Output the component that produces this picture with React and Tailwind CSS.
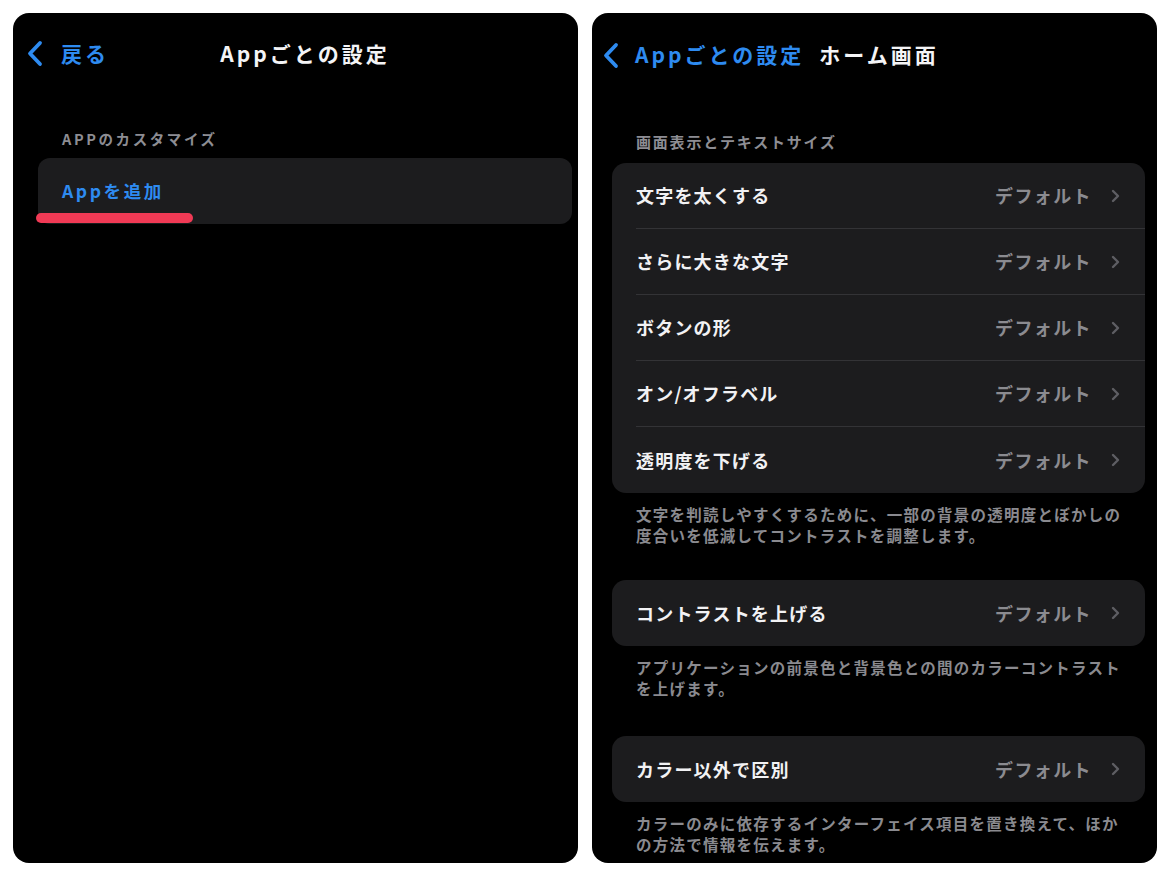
import React from "react";

const FONT = { fontFamily: '"Noto Sans CJK JP", "Noto Sans", sans-serif' };

function BackChevron() {
  return (
    <svg width="18" height="27" viewBox="0 0 18 27" fill="none">
      <path d="M14 3 L4 13.5 L14 24" stroke="#2e8bf0" strokeWidth="3.8" strokeLinecap="round" strokeLinejoin="round" />
    </svg>
  );
}

function RowChevron() {
  return (
    <svg width="9" height="14" viewBox="0 0 9 14" fill="none">
      <path d="M2 2 L7 7 L2 12" stroke="#5e5e63" strokeWidth="2.4" strokeLinecap="round" strokeLinejoin="round" />
    </svg>
  );
}

function Row({ label, last }) {
  return (
    <div className="flex h-[66px] items-stretch pl-[24px]">
      <div className={`flex flex-1 items-center justify-between pr-[25px] ${last ? "" : "border-b border-[#333336]"}`}>
        <span className="text-[18px] font-bold tracking-[1.2px] text-[#f2f2f4]">{label}</span>
        <span className="flex items-center gap-[19px]">
          <span className="text-[18px] font-bold tracking-[1.4px] text-[#8b8b90]">デフォルト</span>
          <RowChevron />
        </span>
      </div>
    </div>
  );
}

function Footer({ children }) {
  return (
    <p className="pl-[24px] pr-[18px] pt-[11px] text-[15.5px] font-bold leading-[21px] tracking-[1.25px] text-[#8a8a8f]">
      {children}
    </p>
  );
}

export default function App() {
  return (
    <div className="flex h-[878px] w-[1170px] gap-[14px] bg-white pl-[13px] pt-[13px]" style={FONT}>
      {/* Left panel */}
      <div className="relative flex h-[850px] w-[565px] flex-col rounded-[16px] bg-black">
        <div className="mt-[25px] grid h-[28px] grid-cols-[1fr_auto_1fr] items-center pl-[13px]">
          <div className="flex items-center gap-[17px]">
            <BackChevron />
            <span className="text-[21px] font-bold tracking-[3px] text-[#2e8bf0]">戻る</span>
          </div>
          <span className="pl-[6px] text-[21px] font-bold tracking-[3px] text-[#f4f4f6]">Appごとの設定</span>
          <div />
        </div>
        <div className="mt-[63px] h-[20px] pl-[49px] text-[14.5px] font-bold leading-[20px] tracking-[2.6px] text-[#8d8d93]">
          APPのカスタマイズ
        </div>
        <div className="ml-[25px] mr-[6px] mt-[9px] flex h-[66px] items-center rounded-[12px] bg-[#1c1c1e] pl-[24px]">
          <span className="text-[17.5px] font-bold tracking-[2.6px] text-[#2e8bf0]">Appを追加</span>
        </div>
        <div className="absolute left-[23px] top-[200px] h-[10px] w-[157px] rounded-full bg-[#f03a55]" />
      </div>

      {/* Right panel */}
      <div className="flex h-[850px] w-[565px] flex-col overflow-hidden rounded-[16px] bg-black">
        <div className="mt-[28px] flex h-[28px] items-center pl-[10px]">
          <BackChevron />
          <span className="ml-[15px] text-[21px] font-bold tracking-[3px] text-[#2e8bf0]">Appごとの設定</span>
          <span className="ml-[15px] text-[21px] font-bold tracking-[3px] text-[#f4f4f6]">ホーム画面</span>
        </div>
        <div className="mt-[63px] h-[20px] pl-[44px] text-[15px] font-bold leading-[20px] tracking-[1.8px] text-[#8d8d93]">
          画面表示とテキストサイズ
        </div>
        <div className="ml-[20px] mr-[12px] flex flex-col">
          <div className="mt-[11px] flex flex-col rounded-[14px] bg-[#1c1c1e]">
            <Row label="文字を太くする" />
            <Row label="さらに大きな文字" />
            <Row label="ボタンの形" />
            <Row label="オン/オフラベル" />
            <Row label="透明度を下げる" last />
          </div>
          <Footer>
            文字を判読しやすくするために、一部の背景の透明度とぼかしの度合いを低減してコントラストを調整します。
          </Footer>
          <div className="mt-[34px] flex flex-col rounded-[14px] bg-[#1c1c1e]">
            <Row label="コントラストを上げる" last />
          </div>
          <Footer>
            アプリケーションの前景色と背景色との間のカラーコントラストを上げます。
          </Footer>
          <div className="mt-[37px] flex flex-col rounded-[14px] bg-[#1c1c1e]">
            <Row label="カラー以外で区別" last />
          </div>
          <Footer>
            カラーのみに依存するインターフェイス項目を置き換えて、ほかの方法で情報を伝えます。
          </Footer>
        </div>
      </div>
    </div>
  );
}
